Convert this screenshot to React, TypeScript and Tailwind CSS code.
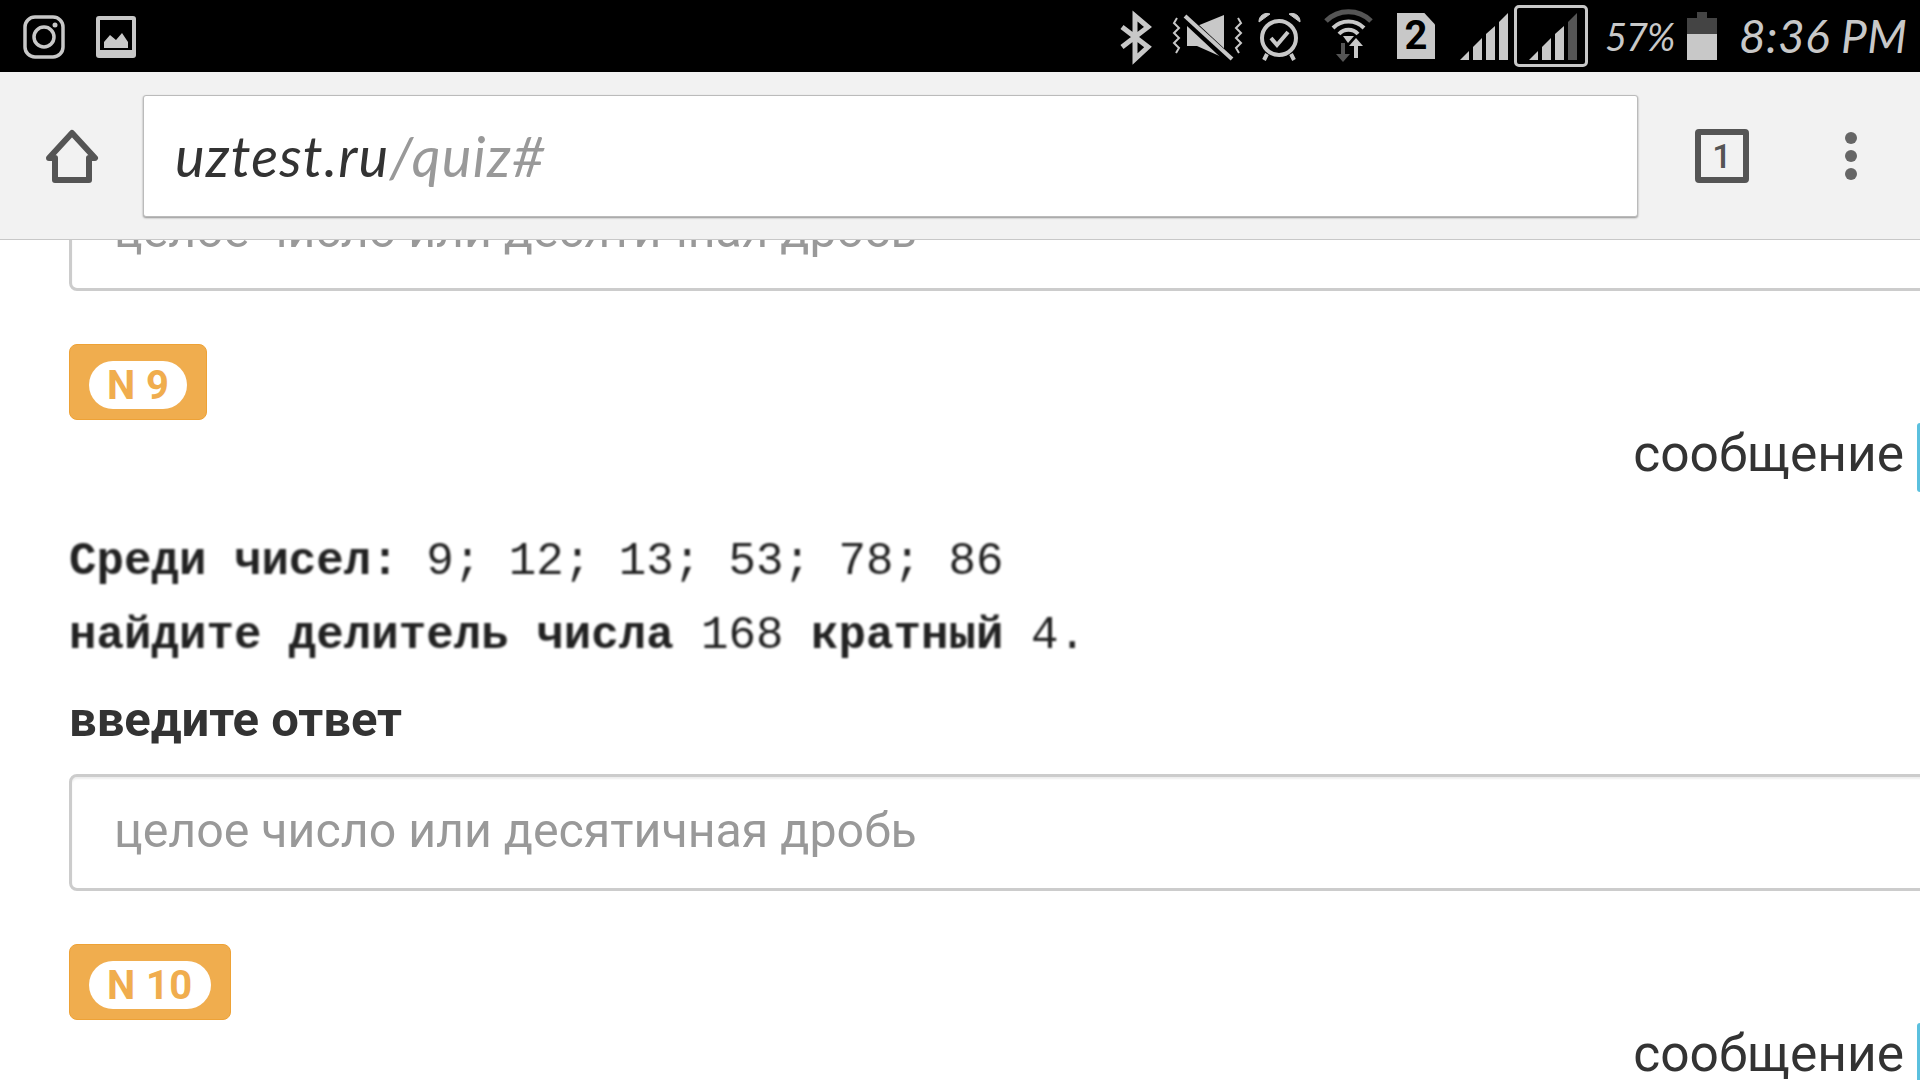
const Signal = ({ last }: { last: string }) => (
  <svg viewBox="0 0 49 72" className="w-[49px] h-[72px] shrink-0">
    <polygon points="0,60 9,51 9,60" fill="#c8c8c8" />
    <polygon points="13,47 22,38 22,60 13,60" fill="#c8c8c8" />
    <polygon points="26,34 35,26 35,60 26,60" fill="#c8c8c8" />
    <polygon points="39,22 48,13 48,60 39,60" fill={last} />
  </svg>
);

const Question = ({ n }: { n: number }) => (
  <div className="flex flex-col">
    <div className="flex items-center self-start h-[76px] px-[19px] pt-[5px] rounded-[8px] bg-[#f0ad4e] border border-[#eea236]">
      <span className="flex items-center h-[48px] px-[18px] pt-[2px] rounded-full bg-white text-[#f0ad4e] text-[40px] font-bold tracking-[0.4px]">N {n}</span>
    </div>
    <div className="flex justify-end items-center gap-[13px] mt-[3px] h-[69px]">
      <span className="text-[51.5px] leading-none text-[#333] -mt-[8px]">сообщение</span>
      <span className="w-[3px] h-[69px] rounded-l-[4px] bg-[#5bc0de]" />
    </div>
    <div className="mt-[33px] font-['Liberation_Mono',monospace] text-[45.8px] leading-[74px] text-[#222] whitespace-nowrap blur-[1px]">
      <div><b>Среди чисел:</b> 9; 12; 13; 53; 78; 86</div>
      <div><b>найдите делитель числа</b> 168 <b>кратный</b> 4.</div>
    </div>
    <div className="mt-[22px] h-[50px] text-[49px] leading-[50px] font-bold text-[#333]">введите ответ</div>
    <Answer />
  </div>
);

const Answer = () => (
  <input
    readOnly
    placeholder="целое число или десятичная дробь"
    className="mt-[29px] block w-[1900px] h-[117px] pl-[42px] pb-[4px] rounded-[8px] border-[3px] border-[#ccc] bg-white text-[48.3px] placeholder:text-[#999] shadow-[inset_0_2px_2px_rgba(0,0,0,0.07)] outline-none"
  />
);

export default function App() {
  return (
    <div className="relative w-[1920px] h-[1080px] overflow-hidden bg-white font-['Roboto',sans-serif]">
      <header className="absolute inset-x-0 top-0 z-10">
        <div className="flex items-center justify-between h-[72px] bg-black pl-[23px] pr-[15px]">
          <div className="flex items-center gap-[31px]">
            <svg viewBox="0 0 42 72" className="w-[42px] h-[72px]" fill="none" stroke="#c8c8c8" strokeWidth="3.5">
              <rect x="2" y="17" width="38" height="40" rx="10" />
              <circle cx="21" cy="37" r="10" />
              <circle cx="32" cy="25" r="2.5" fill="#c8c8c8" stroke="none" />
            </svg>
            <svg viewBox="0 0 40 72" className="w-[40px] h-[72px]">
              <path d="M3 16h34a3 3 0 0 1 3 3v36a3 3 0 0 1-3 3H3a3 3 0 0 1-3-3V19a3 3 0 0 1 3-3z" fill="#c8c8c8" />
              <rect x="4" y="20" width="32" height="30" fill="#000" />
              <polygon points="8,48 8,42 14,35 20,40 26,33 32,42 32,48" fill="#c8c8c8" />
            </svg>
          </div>
          <div className="flex items-center">
            <svg viewBox="0 0 33 72" className="w-[33px] h-[72px]" fill="none" stroke="#c8c8c8" strokeWidth="5">
              <path d="M3 27 L29 47 L16 59 V16 L29 27 L3 47" />
            </svg>
            <svg viewBox="0 0 71 72" className="ml-[20px] w-[71px] h-[72px]">
              <polygon points="15,26 25,26 52,15 52,58 25,46 15,46" fill="#c8c8c8" />
              <path d="M13 18 L58 60" stroke="#000" strokeWidth="9" />
              <path d="M13 16 L60 59" stroke="#c8c8c8" strokeWidth="4" />
              <path d="M5 18 l-3 5 l5 5 l-5 5 l5 5 l-5 5 l5 5 l-3 5" fill="none" stroke="#c8c8c8" strokeWidth="2" />
              <path d="M66 18 l3 5 l-5 5 l5 5 l-5 5 l5 5 l-5 5 l3 5" fill="none" stroke="#c8c8c8" strokeWidth="2" />
            </svg>
            <svg viewBox="0 0 45 72" className="ml-[14px] w-[45px] h-[72px]" fill="none" stroke="#c8c8c8">
              <circle cx="22" cy="38" r="17" strokeWidth="4" />
              <path d="M14 38 l6 7 l11 -13" strokeWidth="4" />
              <path d="M2 22 a8 8 0 0 1 11 -8 z M43 22 a8 8 0 0 0 -11 -8 z" fill="#c8c8c8" strokeWidth="1" />
              <path d="M10 54 l-3 6 M34 54 l3 6" strokeWidth="4" />
            </svg>
            <svg viewBox="0 0 49 72" className="ml-[22px] w-[49px] h-[72px]" fill="none">
              <path d="M2 21 A32 32 0 0 1 47 21" stroke="#555" strokeWidth="5" />
              <path d="M9 28 A22 22 0 0 1 40 28" stroke="#c8c8c8" strokeWidth="4" />
              <path d="M15 34 A13 13 0 0 1 34 34" stroke="#c8c8c8" strokeWidth="4" />
              <polygon points="24,43 19,36 30,36" fill="#c8c8c8" />
              <path d="M19 43 V55" stroke="#555" strokeWidth="4" />
              <polygon points="12,54 26,54 19,62" fill="#555" />
              <path d="M32 41 V58" stroke="#c8c8c8" strokeWidth="4" />
              <polygon points="25,46 39,46 32,38" fill="#c8c8c8" />
            </svg>
            <div className="ml-[24px] relative w-[38px] h-[46px] bg-[#c8c8c8] [clip-path:polygon(0_0,72%_0,100%_25%,100%_100%,0_100%)] flex items-center justify-center text-black text-[40px] font-bold leading-none">2</div>
            <div className="ml-[25px]"><Signal last="#c8c8c8" /></div>
            <div className="ml-[5px] w-[74px] h-[62px] rounded-[5px] border-[3px] border-[#c8c8c8] flex items-center justify-end pr-[7px]">
              <div className="-my-[10px]"><Signal last="#555" /></div>
            </div>
            <span className="ml-[17px] w-[71px] font-['Lato',sans-serif] italic text-[38px] text-[#c8c8c8] tracking-[-1px] whitespace-nowrap leading-none">57%</span>
            <svg viewBox="0 0 30 72" className="ml-[11px] w-[30px] h-[72px]">
              <rect x="10" y="12" width="10" height="7" fill="#444" />
              <rect x="0" y="18" width="30" height="16" fill="#444" />
              <rect x="0" y="34" width="30" height="26" fill="#c8c8c8" />
            </svg>
            <span className="ml-[22px] w-[166px] font-['Lato',sans-serif] italic text-[46px] text-[#c8c8c8] tracking-[0.4px] whitespace-nowrap leading-none">8:36 PM</span>
          </div>
        </div>
        <div className="flex items-center h-[168px] bg-[#f2f2f2] border-b border-[#c8c8c8] pl-[45px]">
          <svg viewBox="0 0 54 54" className="w-[54px] h-[54px] shrink-0" fill="none" stroke="#555" strokeWidth="6" strokeLinejoin="round">
            <path d="M27 4 L50 29 H44 V51 H10 V29 H4 Z" />
          </svg>
          <div className="ml-[44px] flex items-center w-[1495px] h-[122px] rounded-[3px] bg-white border border-[#bbb] shadow-[0_1px_2px_rgba(0,0,0,0.4)] pl-[31px] font-['Lato',sans-serif] italic text-[56px] whitespace-nowrap">
            <span className="text-[#333] tracking-[1.2px]">uztest.ru</span>
            <span className="text-[#999] tracking-[1.4px]">/quiz#</span>
          </div>
          <div className="ml-[57px] flex items-center justify-center w-[54px] h-[54px] rounded-[4px] border-[6px] border-[#555] text-[#555] text-[34px] font-medium leading-none">1</div>
          <div className="ml-[96px] flex flex-col gap-[6px]">
            <span className="w-[12px] h-[12px] rounded-full bg-[#666]" />
            <span className="w-[12px] h-[12px] rounded-full bg-[#666]" />
            <span className="w-[12px] h-[12px] rounded-full bg-[#666]" />
          </div>
        </div>
      </header>
      <main className="flex flex-col pl-[69px] pt-[145px]">
        <Answer />
        <div className="mt-[53px]"><Question n={9} /></div>
        <div className="mt-[53px]"><Question n={10} /></div>
      </main>
    </div>
  );
}
